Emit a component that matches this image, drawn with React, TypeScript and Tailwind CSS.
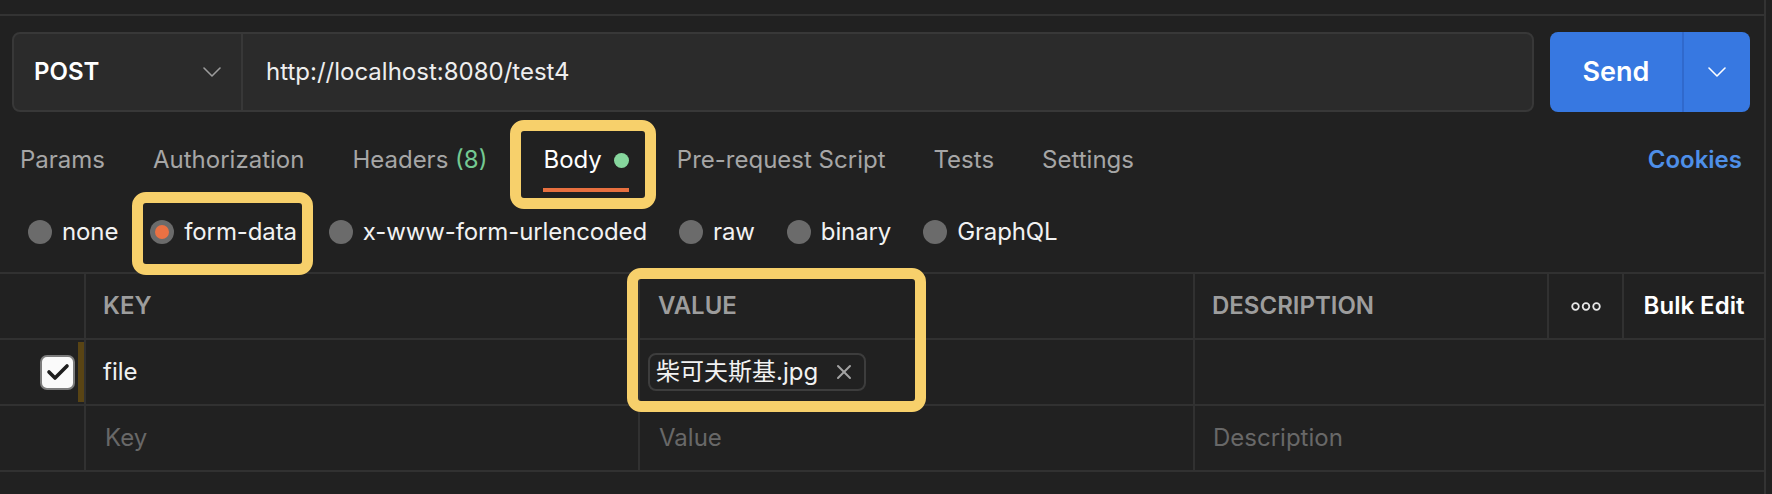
import type { ReactNode } from "react";

const tabs = [
  { label: "Params" },
  { label: "Authorization" },
  { label: "Headers", count: "(8)" },
  { label: "Body", active: true },
  { label: "Pre-request Script" },
  { label: "Tests" },
  { label: "Settings" },
];

const bodyModes = ["none", "form-data", "x-www-form-urlencoded", "raw", "binary", "GraphQL"];

function Chevron({ className }: { className?: string }) {
  return (
    <svg width="18" height="10" viewBox="0 0 18 10" className={className} fill="none">
      <polyline points="1,1 9,9 17,1" stroke="currentColor" strokeWidth="1.6" strokeLinecap="round" strokeLinejoin="round" />
    </svg>
  );
}

function Highlight({ className }: { className: string }) {
  return (
    <div
      className={`pointer-events-none absolute rounded-[14px] border-[11px] border-[#f7d06b] ${className}`}
    />
  );
}

function Cell({ className = "", children }: { className?: string; children?: ReactNode }) {
  return <div className={`flex h-full items-center ${className}`}>{children}</div>;
}

export default function App() {
  return (
    <div className="relative flex h-[494px] w-[1772px] overflow-hidden bg-[#212121] font-['Inter',sans-serif] text-[24px] text-[#f2f2f2]">
      <div className="flex w-[1766px] flex-col border-r-2 border-[#333333]">
        <div className="h-[16px] shrink-0 border-b-2 border-[#333333]" />

        {/* request bar */}
        <div className="flex gap-[16px] pt-[16px] pl-[12px] pr-[14px]">
          <div className="flex h-[80px] flex-1 rounded-[8px] border-2 border-[#383838] bg-[#2b2b2b]">
            <div className="flex w-[229px] items-center justify-between border-r-2 border-[#383838] px-[20px]">
              <span className="font-semibold text-white">POST</span>
              <Chevron className="text-[#9c9c9c]" />
            </div>
            <div className="flex items-center pl-[23px] text-[#eeeeee]">http://localhost:8080/test4</div>
          </div>
          <div className="flex h-[80px] w-[200px] rounded-[8px] bg-[#3778e1]">
            <div className="flex w-[134px] items-center justify-center border-r-2 border-[#3069cc] text-[27px] font-semibold text-white">
              Send
            </div>
            <div className="flex flex-1 items-center justify-center text-white">
              <Chevron />
            </div>
          </div>
        </div>

        {/* tabs */}
        <div className="flex h-[80px] items-start gap-[48px] pl-[20px] pr-[22px]">
          {tabs.map((tab) => (
            <div key={tab.label} className={`flex flex-col pt-[32px] ${tab.active ? "ml-[8px]" : ""}`}>
              <div
                className={`flex items-center gap-[12px] leading-[32px] ${
                  tab.active ? "text-white" : "text-[#a6a6a6]"
                }`}
              >
                <span>
                  {tab.label}
                  {tab.count && <span className="text-[#74c992]"> {tab.count}</span>}
                </span>
                {tab.active && <span className="h-[15px] w-[15px] rounded-full bg-[#86d69d]" />}
              </div>
              <div className={`mt-[12px] h-[4px] ${tab.active ? "bg-[#e8703f]" : ""}`} />
            </div>
          ))}
          <div className="ml-auto pt-[32px] font-semibold leading-[32px] text-[#4e8fe8]">Cookies</div>
        </div>

        {/* body modes */}
        <div className="flex h-[80px] items-center gap-[32px] pb-[1px] pl-[28px]">
          {bodyModes.map((mode) => (
            <div key={mode} className="flex items-center gap-[10px] leading-[32px]">
              <span className="flex h-[24px] w-[24px] items-center justify-center rounded-full bg-[#6b6b6b]">
                {mode === "form-data" && <span className="h-[14px] w-[14px] rounded-full bg-[#ea7143]" />}
              </span>
              <span className="tracking-[-0.12px] text-[#f2f2f2]">{mode}</span>
            </div>
          ))}
        </div>

        {/* params table */}
        <div className="border-t-2 border-[#313131]">
          <div className="flex h-[66px] border-b-2 border-[#313131] font-semibold text-[#9d9d9d]">
            <Cell className="w-[86px] border-r-2 border-[#313131]" />
            <Cell className="w-[554px] border-r-2 border-[#313131] pl-[17px]">KEY</Cell>
            <Cell className="w-[555px] border-r-2 border-[#313131] pl-[18px]">VALUE</Cell>
            <Cell className="w-[354px] border-r-2 border-[#313131] pl-[17px]">DESCRIPTION</Cell>
            <Cell className="w-[75px] justify-center border-r-2 border-[#313131]">
              <svg width="30" height="9" viewBox="0 0 30 9" fill="none" stroke="#e6e6e6" strokeWidth="1.8">
                <circle cx="4.5" cy="4.5" r="3.3" />
                <circle cx="15" cy="4.5" r="3.3" />
                <circle cx="25.5" cy="4.5" r="3.3" />
              </svg>
            </Cell>
            <Cell className="flex-1 justify-center text-white">Bulk Edit</Cell>
          </div>

          <div className="flex h-[66px] border-b-2 border-[#313131]">
            <Cell className="w-[86px] justify-end gap-[3px] border-r-2 border-[#313131]">
              <span className="flex h-[35px] w-[35px] items-center justify-center rounded-[7px] border-2 border-[#7c7c7c] bg-[#fafafa]">
                <svg width="24" height="18" viewBox="0 0 24 18" fill="none">
                  <polyline points="3,9 9,15 21,3" stroke="#1e1e1e" strokeWidth="3.6" strokeLinecap="round" strokeLinejoin="round" />
                </svg>
              </span>
              <span className="h-[60px] w-[6px] bg-[#594414]" />
            </Cell>
            <Cell className="w-[554px] border-r-2 border-[#313131] pl-[17px] text-[#f2f2f2]">file</Cell>
            <Cell className="w-[555px] border-r-2 border-[#313131] pl-[8px]">
              <span className="flex h-[38px] w-[218px] items-center justify-between rounded-[8px] border-2 border-[#3d3d3d] pl-[6px] pr-[12px] font-['Inter','Noto_Sans_CJK_SC',sans-serif] text-[#f2f2f2]">
                柴可夫斯基.jpg
                <svg width="16" height="16" viewBox="0 0 16 16" fill="none" stroke="#a3a3a3" strokeWidth="2" strokeLinecap="round">
                  <line x1="2" y1="2" x2="14" y2="14" />
                  <line x1="14" y1="2" x2="2" y2="14" />
                </svg>
              </span>
            </Cell>
            <Cell className="flex-1" />
          </div>

          <div className="flex h-[66px] border-b-2 border-[#313131] text-[#686868]">
            <Cell className="w-[86px] border-r-2 border-[#313131]" />
            <Cell className="w-[554px] border-r-2 border-[#313131] pl-[19px]">Key</Cell>
            <Cell className="w-[555px] border-r-2 border-[#313131] pl-[19px]">Value</Cell>
            <Cell className="flex-1 pl-[18px]">Description</Cell>
          </div>
        </div>
      </div>

      <Highlight className="left-[510px] top-[120px] h-[89px] w-[146px]" />
      <Highlight className="left-[132px] top-[192px] h-[83px] w-[181px]" />
      <Highlight className="left-[627px] top-[268px] h-[144px] w-[299px]" />
    </div>
  );
}
